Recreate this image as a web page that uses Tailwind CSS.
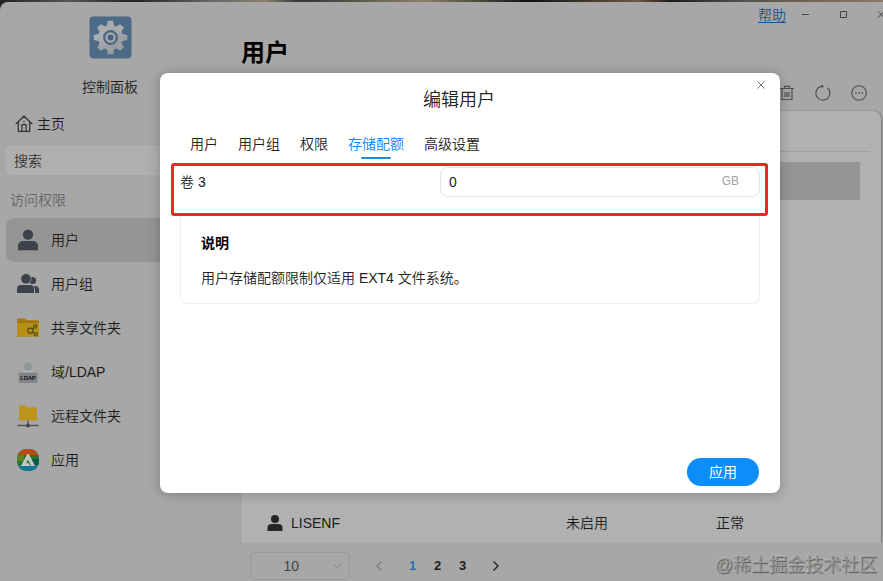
<!DOCTYPE html>
<html lang="zh-CN">
<head>
<meta charset="utf-8">
<title>用户</title>
<script src="https://cdn.jsdelivr.net/npm/@tailwindcss/browser@4"></script>
</head>
<body class="relative h-[581px] w-[883px] overflow-hidden bg-[linear-gradient(90deg,#222_0%,#555_8%,#222_15%,#666_24%,#8a8170_30%,#333_34%,#8b8169_48%,#111_60%,#6a5948_72%,#211b19_76%,#55504a_84%,#8c7868_100%)] font-['Liberation_Sans','Noto_Sans_CJK_SC',sans-serif] text-sm font-[350] text-[#1c1c1c]">
<div class="flex h-full pt-[2px]">
  <div class="flex h-[579px] w-full rounded-tl-lg bg-[#a7a7a7]">
    <!-- Sidebar -->
    <aside class="flex w-[220px] shrink-0 flex-col">
      <div class="flex flex-col items-center pt-[14px]">
        <svg class="h-[43px] w-[43px]" viewBox="0 0 43 43">
          <defs><linearGradient id="g" x1="0" y1="0" x2="1" y2="1"><stop offset="0" stop-color="#b4b7b9"/><stop offset="1" stop-color="#92969a"/></linearGradient></defs>
          <rect x=".5" y=".5" width="42" height="42" rx="4" fill="#4d6a86"/>
          <g fill="url(#g)" transform="translate(21.5 21.5)">
            <circle r="12.3"/>
            <path d="M-3.8-11-2.6-16.8H2.6L3.8-11ZM-3.8 11-2.6 16.8H2.6L3.8 11ZM-11-3.8-16.8-2.6V2.6L-11 3.8ZM11-3.8 16.8-2.6V2.6L11 3.8Z"/>
            <path transform="rotate(45)" d="M-3.8-11-2.6-16.3H2.6L3.8-11ZM-3.8 11-2.6 16.3H2.6L3.8 11ZM-11-3.8-16.3-2.6V2.6L-11 3.8ZM11-3.8 16.3-2.6V2.6L11 3.8Z"/>
          </g>
          <circle cx="21.5" cy="21.5" r="6.3" fill="#a3acb4" stroke="#4d6479" stroke-width="2.2"/>
          <circle cx="21.5" cy="21.5" r="3" fill="#49627b"/>
        </svg>
        <div class="mt-[18px] h-5 leading-5">控制面板</div>
      </div>
      <div class="mt-[17px] flex h-5 items-center gap-[4px] pl-[15px]">
        <svg class="h-[18px] w-[18px]" viewBox="0 0 18 18" fill="none" stroke="#333" stroke-width="1.2"><path d="M.8 9 9 1.2 17.2 9M3.3 7v9.4h11.4V7M7 16V9.6h4V16M9 5.8v1.5"/></svg>
        <span class="leading-5">主页</span>
      </div>
      <div class="mt-[12px] ml-[6px] flex h-[29px] items-center rounded border border-[#b2b2b2] bg-[#afafaf] pl-[7px] text-[#333]">搜索</div>
      <div class="mt-[15px] h-5 pl-[10px] leading-5 text-[#666]">访问权限</div>
      <nav class="mt-[8px] ml-[6px] flex flex-col">
        <div class="flex h-11 items-center gap-3 rounded-lg bg-[#959595] pl-[11px]">
          <svg class="h-[22px] w-[22px]" viewBox="0 0 22 22" fill="#3d414a"><circle cx="11" cy="5.6" r="5.2"/><path d="M1 21.3V17a5 5 0 0 1 5-5h10a5 5 0 0 1 5 5v4.300Z"/></svg>
          <span>用户</span>
        </div>
        <div class="flex h-11 items-center gap-3 pl-[11px]">
          <svg class="h-[22px] w-[22px]" viewBox="0 0 22 22" fill="#3d414a"><circle cx="15.600" cy="7.5" r="3.500"/><path d="M16.500 13h1.500q4 0 4 4v3h-4v-3q0-2.500-1.500-4Z"/><circle cx="9" cy="5.800" r="5.200" stroke="#a7a7a7" stroke-width=".7"/><path d="M0 20v-4q0-4 4-4h9q4 0 4 4v4Z"/></svg>
          <span>用户组</span>
        </div>
        <div class="flex h-11 items-center gap-3 pl-[11px]">
          <svg class="h-[22px] w-[22px]" viewBox="0 0 22 22"><path d="M0 19V3q0-1.500 1.500-1.500H8l2 1.700h10.500Q22 3.200 22 5v14.500H0Z" fill="#a27910"/><path d="M0 6h22v13.500H0Z" fill="#b98f19"/><g fill="none" stroke="#4c4a12" stroke-width="1.100"><circle cx="13.300" cy="13.700" r="2.600"/><circle cx="18.200" cy="9.500" r="1.600"/><circle cx="18.800" cy="17.300" r="1.600"/><path d="m15.300 12 1.700-1.400M15.600 15l1.800 1.200"/></g></svg>
          <span>共享文件夹</span>
        </div>
        <div class="flex h-11 items-center gap-3 pl-[11px]">
          <svg class="h-[22px] w-[22px]" viewBox="0 0 22 22"><circle cx="11" cy="5.500" r="4.300" fill="#929698"/><path d="M5 12q1-2 3-2h6q2 0 3 2Z" fill="#b6b8b9"/><rect x="1.500" y="11.500" width="19" height="10.500" rx="1.500" fill="#808489"/><text x="11" y="19.300" text-anchor="middle" font-family="Liberation Sans" font-weight="700" font-size="6" textLength="15.500" fill="#161616">LDAP</text></svg>
          <span>域/LDAP</span>
        </div>
        <div class="flex h-11 items-center gap-3 pl-[11px]">
          <svg class="h-[23px] w-[22px]" viewBox="0 0 22 23"><path d="M2 15V2q0-1.500 1.500-1.500H8l2 1.700h8.500Q20 2.200 20 4v11.500H2Z" fill="#bd941b"/><path d="M11 15.500V20M.5 20.500h21" stroke="#555" stroke-width="1.300"/><circle cx="11" cy="20.500" r="1.900" fill="#454545"/></svg>
          <span>远程文件夹</span>
        </div>
        <div class="flex h-11 items-center gap-3 pl-[11px]">
          <svg class="h-[22px] w-[22px]" viewBox="0 0 22 22"><defs><clipPath id="c"><rect width="22" height="22" rx="9.500"/></clipPath></defs><g clip-path="url(#c)"><path fill="#277329" d="M0 0h22v22H0Z"/><path fill="#b74b12" d="M0 0h22v6H0Z"/><path fill="#598524" d="M0 6h7v6H0Z"/><path fill="#167795" d="M0 16h22v6H0Z"/><path fill="#0c5748" d="M15 10h7v6h-5Z"/></g><path d="M4 17 10.300 5h1.600L18 17h-3.800L11 10.500l-2 4 2-.8 2.500 3.300Z" fill="#c4c9c5"/></svg>
          <span>应用</span>
        </div>
      </nav>
    </aside>

    <!-- User list -->
    <main class="ml-[21px] flex w-[642px] flex-col">
      <div class="flex h-[24px] shrink-0 items-center justify-end">
        <a class="pt-[2px] text-[#11589b] underline underline-offset-2">帮助</a>
        <svg class="ml-4 h-3 w-[81px]" viewBox="0 0 81 12" fill="none" stroke="#444"><path d="M0 6.500h7M38.500 3.500h6v6h-6ZM76 3.500l6 6M76 9.500l6-6"/></svg>
      </div>
      <h1 class="mt-[9px] h-9 shrink-0 text-2xl leading-9 font-bold text-black">用户</h1>
      <div class="mt-[12px] flex h-5 shrink-0 items-center justify-end gap-[20px] pr-[16px]">
        <svg class="h-4 w-4" viewBox="0 0 16 16" fill="none" stroke="#505050" stroke-width="1.200"><path d="M1 3.500h14M5.500 3V1.300h5V3M3 3.500v11h10v-11M6 7v5M8 7v5M10 7v5"/></svg>
        <svg class="h-4 w-4" viewBox="0 0 16 16" fill="none" stroke="#505050" stroke-width="1.200"><path d="M12.500 2.800A7 7 0 1 1 5.300 1.600L8 1M6 .6 8 1 7 2.800"/></svg>
        <svg class="h-4 w-4" viewBox="0 0 16 16" fill="none" stroke="#505050" stroke-width="1.100"><circle cx="8" cy="8" r="7.300"/><path d="M4 8h1.700M7.200 8h1.700M10.400 8H12" stroke-width="1.400"/></svg>
      </div>
      <section class="mt-[8px] ml-px flex h-[432px] w-[639px] shrink-0 flex-col justify-between rounded-t-lg border-l border-[#b5b5b5] bg-[#b1b1b1] shadow-[1px_0_2px_#777]">
        <div>
          <div class="ml-[10px] h-[41px] w-[617px] border-b border-[#a0a0a0]"></div>
          <div class="mt-[10px] ml-[20px] h-[38px] w-[597px] bg-[#959595]"></div>
        </div>
        <div class="flex h-10 items-center pl-[24px]">
          <svg class="h-4 w-4" viewBox="0 0 16 16" fill="#252525"><circle cx="8" cy="4" r="4"/><path d="M.5 16v-3a4 4 0 0 1 4-4h7a4 4 0 0 1 4 4v3Z"/></svg>
          <span class="ml-[8px] w-[275px]">LISENF</span><span class="w-[150px]">未启用</span><span>正常</span>
        </div>
      </section>
      <div class="flex h-[38px] shrink-0 items-center bg-[#a7a7a7] pt-[7px] pl-[9px]">
        <div class="flex h-[28px] w-[100px] items-center justify-end rounded-sm border border-[#9a9a9a] pr-[7px] text-[#444]"><span class="mr-[34px]">10</span><svg class="h-2 w-[9px]" viewBox="0 0 9 8" fill="none" stroke="#858585"><path d="m.5 2 4 4 4-4"/></svg></div>
        <svg class="ml-[25px] h-3 w-2" viewBox="0 0 8 12" fill="none" stroke="#777" stroke-width="1.200"><path d="M6.500 1.500 2 6l4.500 4.500"/></svg>
        <div class="ml-[26px] flex pt-px text-[13px] font-bold"><span class="w-[25px] text-[#2b6dae]">1</span><span class="w-[25px]">2</span><span class="w-[33px]">3</span></div>
        <svg class="h-3 w-2" viewBox="0 0 8 12" fill="none" stroke="#222" stroke-width="1.400"><path d="M1.500 1.500 6 6l-4.500 4.500"/></svg>
      </div>
    </main>
  </div>
</div>

<!-- Edit dialog -->
<div class="absolute top-[73px] left-[160px] flex h-[420px] w-[620px] flex-col rounded-lg bg-white shadow-[0_1px_12px_rgba(0,0,0,0.25)]">
  <svg class="absolute top-[8px] right-[15px] h-[8px] w-[8px]" viewBox="0 0 8 8" stroke="#666" stroke-width=".9"><path d="m.4.4 7.200 7.200M7.600.4.400 7.600"/></svg>
  <h2 class="mt-[15px] h-6 text-center text-[18px] leading-6 text-[#222] pr-[22px]">编辑用户</h2>
  <div class="mt-[22px] flex h-[25px] gap-5 pl-[30px] leading-5 text-[#222]">
    <span>用户</span><span>用户组</span><span>权限</span>
    <span class="flex flex-col items-center text-[#0a86f5]">存储配额<i class="mt-[2.500px] h-[2px] w-[30px] shrink-0 rounded bg-[#218bd5]"></i></span>
    <span>高级设置</span>
  </div>
  <div class="mx-[20px] mt-[8px] flex h-[30px] items-center justify-between text-[#222]">
    <span>卷 3</span>
    <div class="flex h-[30px] w-[320px] items-center justify-between rounded-lg border border-[#e6e6e6] pr-[20px] pl-[8px]"><span>0</span><span class="text-[12px] text-[#a3a3a3]">GB</span></div>
  </div>
  <div class="mx-[20px] mt-[19px] flex h-[88px] flex-col rounded-b-lg border border-t-0 border-[#ededed] px-[20px] pt-[17px] text-[#222]">
    <div class="h-5 leading-5 font-bold text-black">说明</div>
    <div class="mt-[15px] h-5 leading-5">用户存储配额限制仅适用 EXT4 文件系统。</div>
  </div>
  <button class="mt-auto mr-[21px] mb-[7px] h-[28px] w-[72px] self-end rounded-full bg-[#0c8df9] font-normal text-white">应用</button>
</div>
<!-- Highlight frame and watermark -->
<div class="absolute top-[163px] left-[171px] h-[53px] w-[597px] rounded-[3px] border-[3px] border-[#ed281f]"></div>
<div class="absolute right-[6px] bottom-[4px] text-[18px] leading-6 whitespace-nowrap text-[#9b9b9b] [text-shadow:1px_1px_1px_#555,-1px_-1px_0_#b4b4b4]">@稀土掘金技术社区</div>
</body>
</html>
